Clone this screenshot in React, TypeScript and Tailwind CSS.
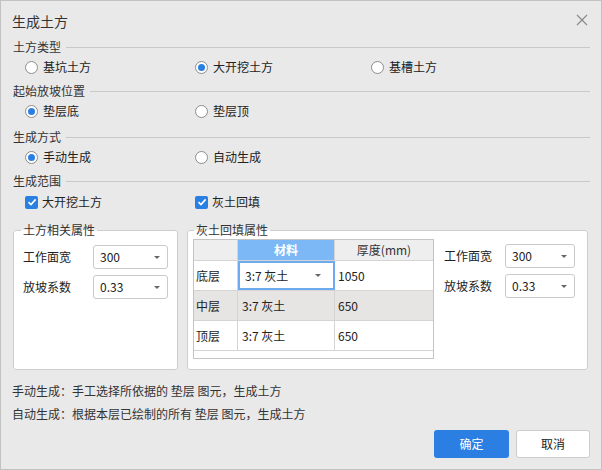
import React from "react";

const FONT = { fontFamily: '"Noto Sans CJK SC", "Noto Sans", sans-serif' };

function SectionHead({ label }: { label: string }) {
  return (
    <div className="flex h-[20px] items-center pl-[12px] pr-[11px]">
      <span className="text-[12px] leading-[16px] text-[#333]">{label}</span>
      <div className="ml-[5px] h-px flex-1 bg-[#c9c9c9]" />
    </div>
  );
}

function Radio({ label, checked, className }: { label: string; checked?: boolean; className?: string }) {
  return (
    <div className={"flex items-center " + (className ?? "")}>
      <span className="flex h-[13px] w-[13px] items-center justify-center rounded-full border border-[#8d8d8d] bg-white">
        {checked && <span className="h-[7px] w-[7px] rounded-full bg-[#2a7fe3]" />}
      </span>
      <span className="ml-[5px] text-[12px] leading-[16px] text-[#222]">{label}</span>
    </div>
  );
}

function Check({ label, className }: { label: string; className?: string }) {
  return (
    <div className={"flex items-center " + (className ?? "")}>
      <span className="flex h-[13px] w-[13px] items-center justify-center rounded-[2px] bg-[#2a7fe3]">
        <svg width="10" height="10" viewBox="0 0 10 10">
          <path d="M1.5 5.2 L4 7.6 L8.6 2.4" fill="none" stroke="white" strokeWidth="1.6" />
        </svg>
      </span>
      <span className="ml-[4px] text-[12px] leading-[16px] text-[#222]">{label}</span>
    </div>
  );
}

function Arrow() {
  return <span className="h-0 w-0 border-x-[3px] border-t-[3px] border-x-transparent border-t-[#666]" />;
}

function Select({ value, className }: { value: string; className: string }) {
  return (
    <div
      className={
        "flex h-[24px] items-center justify-between rounded-[3px] border border-[#cacaca] bg-white pl-[6px] pr-[7px] text-[12px] text-[#222] " +
        className
      }
    >
      <span>{value}</span>
      <Arrow />
    </div>
  );
}

function Field({ label, value, selectClass }: { label: string; value: string; selectClass: string }) {
  return (
    <div className="flex h-[24px] items-center">
      <span className="text-[12px] text-[#222]">{label}</span>
      <Select value={value} className={selectClass} />
    </div>
  );
}

const rows = [
  { name: "底层", mat: "3:7 灰土", th: "1050", active: true },
  { name: "中层", mat: "3:7 灰土", th: "650", hover: true },
  { name: "顶层", mat: "3:7 灰土", th: "650" },
];

export default function App() {
  return (
    <div style={FONT} className="flex h-[470px] w-[602px] flex-col border border-[#c2c2c2] bg-[#e9e9e9] text-[#222]">
      {/* header */}
      <div className="flex h-[36px] items-start justify-between pl-[11px] pr-[13px] pt-[11px]">
        <span className="text-[14px] leading-[18px] text-[#333]">生成土方</span>
        <svg width="12" height="12" viewBox="0 0 12 12" className="mt-[2px]">
          <path d="M1 1 L11 11 M11 1 L1 11" stroke="#8a8a8a" strokeWidth="1.2" />
        </svg>
      </div>

      <SectionHead label="土方类型" />
      <div className="flex h-[20px] items-center pl-[24px]">
        <Radio label="基坑土方" className="w-[170px]" />
        <Radio label="大开挖土方" checked className="w-[176px]" />
        <Radio label="基槽土方" />
      </div>

      <div className="mt-[4px]">
        <SectionHead label="起始放坡位置" />
      </div>
      <div className="flex h-[20px] items-center pl-[24px]">
        <Radio label="垫层底" checked className="w-[170px]" />
        <Radio label="垫层顶" />
      </div>

      <div className="mt-[6px]">
        <SectionHead label="生成方式" />
      </div>
      <div className="flex h-[20px] items-center pl-[24px]">
        <Radio label="手动生成" checked className="w-[170px]" />
        <Radio label="自动生成" />
      </div>

      <div className="mt-[4px]">
        <SectionHead label="生成范围" />
      </div>
      <div className="mt-[1px] flex h-[20px] items-center pl-[24px]">
        <Check label="大开挖土方" className="w-[170px]" />
        <Check label="灰土回填" />
      </div>

      {/* groups */}
      <div className="mt-[10px] flex gap-[9px] pl-[12px]">
        <fieldset className="h-[148px] w-[165px] rounded-[3px] border border-[#cdcdcd] bg-white">
          <legend className="ml-[7px] px-[2px] text-[12px] leading-[16px] text-[#333]">土方相关属性</legend>
          <div className="mt-[7px] flex flex-col gap-[6px] px-[9px]">
            <Field label="工作面宽" value="300" selectClass="ml-[22px] w-[75px]" />
            <Field label="放坡系数" value="0.33" selectClass="ml-[22px] w-[75px]" />
          </div>
        </fieldset>

        <fieldset className="h-[148px] w-[401px] rounded-[3px] border border-[#cdcdcd] bg-white">
          <legend className="ml-[6px] px-[2px] text-[12px] leading-[16px] text-[#333]">灰土回填属性</legend>
          <div className="mt-[1px] flex pl-[5px]">
            <div className="flex h-[120px] w-[241px] flex-col border border-[#c4c4c4] bg-white text-[12px]">
              <div className="flex h-[21px] border-b border-[#d4d4d4]">
                <div className="w-[44px] border-r border-[#d4d4d4] bg-[#eeeeee]" />
                <div className="flex w-[97px] items-center justify-center border-r border-[#d4d4d4] bg-[#7db8f6] font-bold text-white">
                  材料
                </div>
                <div className="flex flex-1 items-center justify-center bg-[#eeeeee] text-[#333]">厚度(mm)</div>
              </div>
              {rows.map((r) => (
                <div
                  key={r.name}
                  className={
                    "flex h-[30px] border-b border-[#d4d4d4] " + (r.hover ? "bg-[#e6e5e3]" : "bg-white")
                  }
                >
                  <div className="flex w-[44px] items-center border-r border-[#d4d4d4] pl-[2px]">{r.name}</div>
                  {r.active ? (
                    <div className="flex w-[97px] items-center justify-between border-2 border-[#6eaaf0] pl-[5px] pr-[12px]">
                      <span>{r.mat}</span>
                      <Arrow />
                    </div>
                  ) : (
                    <div className="flex w-[97px] items-center border-r border-[#d4d4d4] pl-[4px]">{r.mat}</div>
                  )}
                  <div className="flex flex-1 items-center pl-[3px]">{r.th}</div>
                </div>
              ))}
              <div className="flex-1" />
            </div>
            <div className="ml-[10px] mt-[5px] flex flex-col gap-[6px]">
              <Field label="工作面宽" value="300" selectClass="ml-[13px] w-[70px]" />
              <Field label="放坡系数" value="0.33" selectClass="ml-[13px] w-[70px]" />
            </div>
          </div>
        </fieldset>
      </div>

      {/* notes */}
      <div className="mt-[13px] pl-[11px] text-[12px] leading-[16px] text-[#333]">
        <div>手动生成：手工选择所依据的 垫层 图元，生成土方</div>
        <div className="mt-[7px]">自动生成：根据本层已绘制的所有 垫层 图元，生成土方</div>
      </div>

      <div className="mt-[8px] flex justify-end gap-[7px] pr-[11px]">
        <button className="h-[28px] w-[75px] rounded-[3px] bg-[#2b7fe2] text-[12px] text-white">确定</button>
        <button className="h-[28px] w-[74px] rounded-[3px] border border-[#cccccc] bg-white text-[12px] text-[#222]">
          取消
        </button>
      </div>
    </div>
  );
}
